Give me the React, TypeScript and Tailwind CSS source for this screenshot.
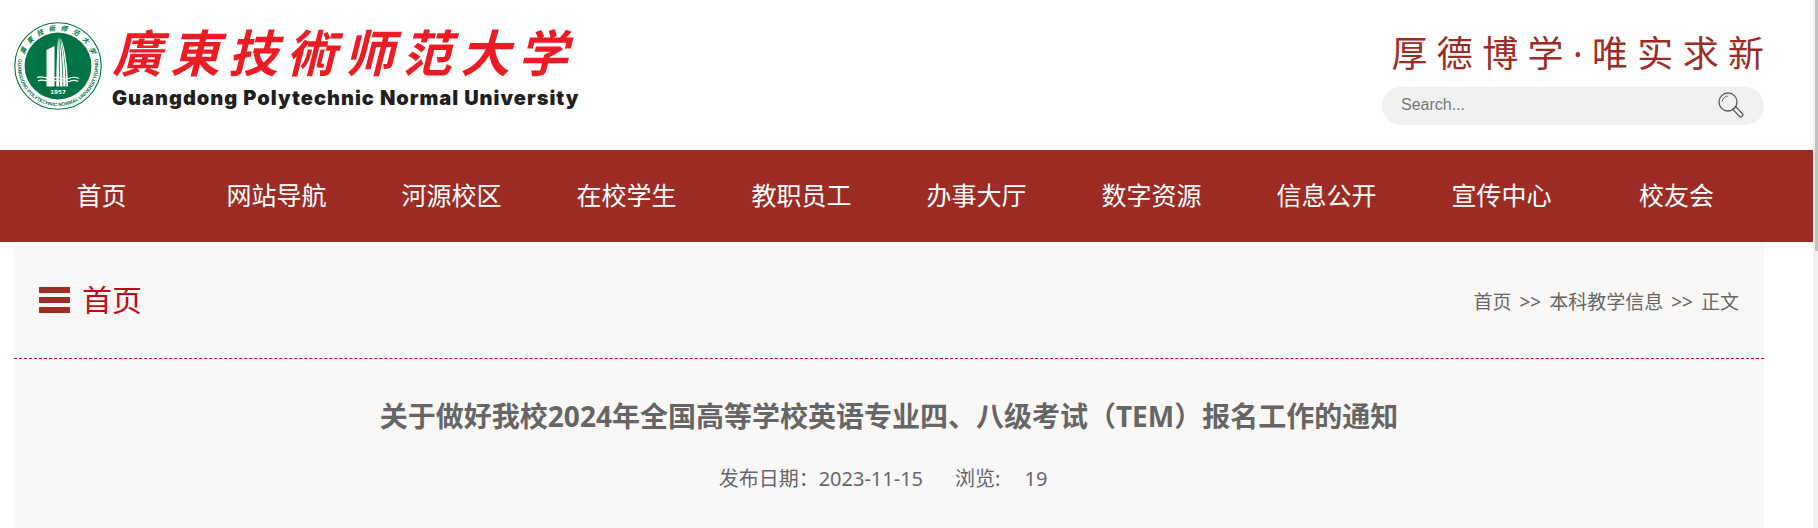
import { Fragment } from "react";

const FONT = "font-['Noto_Sans','Noto_Sans_CJK_SC',sans-serif]";

const navItems = [
  "首页",
  "网站导航",
  "河源校区",
  "在校学生",
  "教职员工",
  "办事大厅",
  "数字资源",
  "信息公开",
  "宣传中心",
  "校友会",
];

const breadcrumbs = ["首页", "本科教学信息", "正文"];

function Seal() {
  return (
    <svg className="size-[88px] shrink-0" viewBox="0 0 88 88" aria-hidden="true">
      <defs>
        <path id="seal-top" d="M 10.4 33 A 35.3 35.3 0 0 1 77.6 33" />
        <path id="seal-bottom" d="M 4.4 37 A 40.2 40.2 0 1 0 83.6 37" />
      </defs>
      <circle cx="44" cy="44" r="43.2" fill="#fff" stroke="#007445" strokeWidth="1.1" />
      <circle cx="44" cy="44" r="33.4" fill="#007445" />
      <text
        fill="#007445"
        fontSize="6.6"
        fontWeight="700"
        fontStyle="italic"
        fontFamily="'Noto Sans CJK TC', sans-serif"
      >
        {["廣", "東", "技", "術", "师", "范", "大", "学"].map((char, i) => (
          <textPath key={i} href="#seal-top" startOffset={`${4 + i * 13.1}%`} textAnchor="middle">
            {char}
          </textPath>
        ))}
      </text>
      <text
        fill="#007445"
        fontSize="4.9"
        fontWeight="700"
        fontFamily="'Liberation Sans', sans-serif"
      >
        <textPath href="#seal-bottom" startOffset="50%" textAnchor="middle">
          GUANGDONG POLYTECHNIC NORMAL UNIVERSITY(GPNU)
        </textPath>
      </text>
      <g fill="#fff">
        <path d="M32.5 28 L40.5 24 V64.5 H32.5 Z" />
        <path d="M42.2 64.5 C42.6 44 42.8 28 44.3 14.5 C45.2 28 45 48 45 64.5 Z" />
        <path d="M45.8 64.5 C46 46 45.8 28 45 15 C47.2 26 48.4 46 48.6 64.5 Z" />
        <path d="M49.3 64.5 C49.2 46 47.8 27 45.9 15 C49.8 27 51.4 47 51.6 64.5 Z" />
        <path d="M52.3 64.5 C52.2 47 50 28 46.8 15.6 C51.8 28 53.8 48 54 64.5 Z" />
      </g>
      <g fill="none" stroke="#fff" strokeWidth="1.1">
        <path d="M23 55.5 C29 53 33 58 39 56 C45 53.5 50 58.5 55 56.5 C59 54.5 62 55 65 56.5" />
        <path d="M24 58.8 C30 56.5 34 60.5 39 59 C45 57 50 61.5 55 59.5 C59 58 62 58 64 59.5" />
      </g>
      <text
        x="44"
        y="71.6"
        fill="#fff"
        fontSize="5.6"
        fontWeight="700"
        textAnchor="middle"
        fontFamily="'DejaVu Sans', sans-serif"
      >
        1957
      </text>
    </svg>
  );
}

function SearchIcon() {
  return (
    <svg
      className="size-[26px]"
      viewBox="0 0 26 26"
      fill="none"
      stroke="#5a5a5a"
      strokeWidth="1.3"
      strokeLinecap="round"
      aria-hidden="true"
    >
      <circle cx="10" cy="10" r="9" />
      <path d="M4.2 9.4 C4.6 6.2 6.8 4.2 9.8 4" strokeWidth="0.9" />
      <path d="M14.7 17.4 L21.4 24.2 C23.2 26 26 23.4 24.3 21.5 L17.6 14.6" />
      <path d="M14.7 17.4 L17.6 14.6" />
    </svg>
  );
}

function Header() {
  return (
    <header className="ml-3.5 mr-[49px] flex h-[150px] justify-between">
      <a href="#" className="mt-[22px] flex h-[88px] items-start gap-2.5">
        <Seal />
        <div>
          <div className="flex h-16 w-[456px] items-center justify-between pb-2 font-['Noto_Sans_CJK_TC',sans-serif] text-[50px] font-bold italic leading-none text-[#ed1c24]">
            {[..."廣東技術师范大学"].map((char) => (
              <span key={char}>{char}</span>
            ))}
          </div>
          <div className="whitespace-nowrap font-['Inter',sans-serif] text-xl leading-6 font-black tracking-wider text-[#231f20]">
            Guangdong Polytechnic Normal University
          </div>
        </div>
      </a>
      <div className="mt-7 flex flex-col items-end">
        <p className="whitespace-nowrap text-4xl leading-[52px] text-[#9d2d24]">
          厚 德 博 学 · 唯 实 求 新
        </p>
        <form className="mt-[7px] flex h-[38px] w-[382px] items-start rounded-full bg-[#f1f1f1] pl-[19px] pr-5">
          <input
            type="text"
            aria-label="Search"
            placeholder="Search..."
            className="h-9 min-w-0 flex-1 bg-transparent font-['Liberation_Sans',sans-serif] text-base text-[#757575] outline-none placeholder:text-[#757575]"
          />
          <button type="button" aria-label="Search" className="mt-[5px]">
            <SearchIcon />
          </button>
        </form>
      </div>
    </header>
  );
}

export default function App() {
  return (
    <div className={`flex min-h-screen bg-white ${FONT}`}>
      <div className="flex min-w-0 flex-1 flex-col">
        <Header />

        <nav className="bg-[#9d2d24] pl-3.5 pr-[49px]">
          <ul className="grid grid-cols-10">
            {navItems.map((item) => (
              <li key={item}>
                <a href="#" className="block pb-0.5 text-center text-[25px] leading-[90px] text-white">
                  {item}
                </a>
              </li>
            ))}
          </ul>
        </nav>

        <main className="ml-3.5 mr-[49px] flex-1 bg-[#f9f8f6]">
          <div className="flex h-[117px] items-center justify-between border-b border-dashed border-[#c1081a] px-[25px]">
            <h2 className="flex items-center gap-3 text-3xl text-[#c1081a]">
              <span className="flex w-[31px] flex-col gap-1">
                <span className="h-1.5 bg-[#9d2d24]" />
                <span className="h-1.5 bg-[#9d2d24]" />
                <span className="h-1.5 bg-[#9d2d24]" />
              </span>
              首页
            </h2>
            <div className="flex gap-2 pt-1 text-[19px] text-[#666]">
              {breadcrumbs.map((crumb, i) => (
                <Fragment key={crumb}>
                  {i > 0 && <span>&gt;&gt;</span>}
                  {i < 2 ? <a href="#">{crumb}</a> : <span>{crumb}</span>}
                </Fragment>
              ))}
            </div>
          </div>

          <h1 className="pt-[35px] text-center text-[28px] leading-[44px] font-bold text-[#666]">
            关于做好我校2024年全国高等学校英语专业四、八级考试（TEM）报名工作的通知
          </h1>
          <div className="mt-[29px] flex h-6 items-center justify-center bg-[#f8f8fb] pr-3 text-xl text-[#666]">
            <span>发布日期：2023-11-15</span>
            <span className="ml-8">浏览:</span>
            <span className="ml-6">19</span>
          </div>
        </main>
      </div>

      <div className="w-[5px] bg-[#f1f1f1] pl-0.5">
        <div className="h-[251px] bg-[#c1c1c1]" />
      </div>
    </div>
  );
}
